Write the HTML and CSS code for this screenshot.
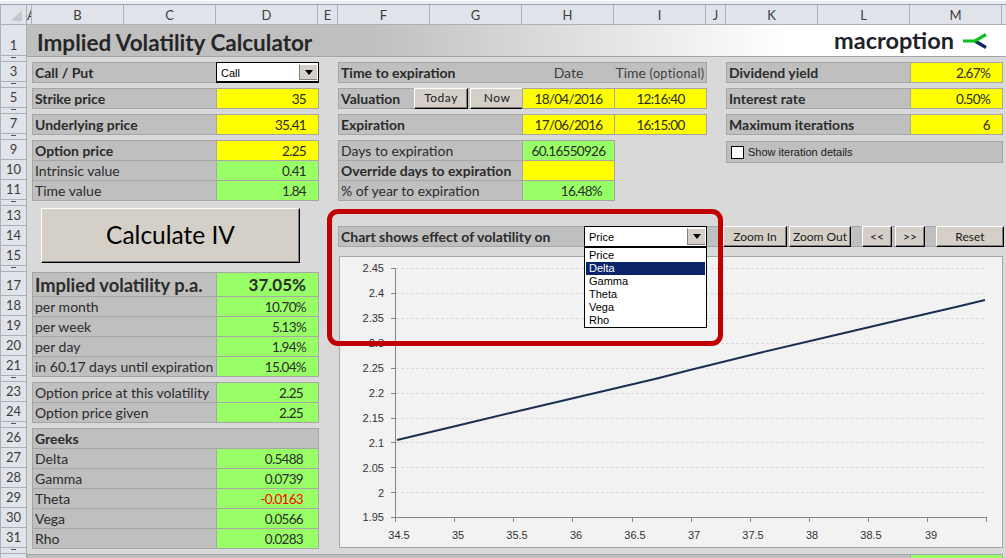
FILE: index.html

```html
<!DOCTYPE html>
<html lang="en">
<head>
    <meta charset="UTF-8">
    <meta name="viewport" content="width=device-width, initial-scale=1.0">
    <title>Implied Volatility Calculator</title>
    <link rel="stylesheet" href="styles.css">
</head>
<body>
    <div class="window-top"></div>

    <div class="sheet">
        <!-- Column headers -->
        <div class="corner"><span class="corner-mark"></span></div>
        <div class="col-head">A</div>
        <div class="col-head">B</div>
        <div class="col-head">C</div>
        <div class="col-head">D</div>
        <div class="col-head">E</div>
        <div class="col-head">F</div>
        <div class="col-head">G</div>
        <div class="col-head">H</div>
        <div class="col-head">I</div>
        <div class="col-head">J</div>
        <div class="col-head">K</div>
        <div class="col-head">L</div>
        <div class="col-head">M</div>
        <div class="col-head col-rest"></div>

        <!-- Row headers -->
        <div class="row-head r1">1</div>
        <div class="row-head gap r2"></div>
        <div class="row-head r3">3</div>
        <div class="row-head gap r4"></div>
        <div class="row-head r5">5</div>
        <div class="row-head gap r6"></div>
        <div class="row-head r7">7</div>
        <div class="row-head gap r8"></div>
        <div class="row-head r9">9</div>
        <div class="row-head r10">10</div>
        <div class="row-head r11">11</div>
        <div class="row-head gap r12"></div>
        <div class="row-head r13">13</div>
        <div class="row-head r14">14</div>
        <div class="row-head r15">15</div>
        <div class="row-head gap r16"></div>
        <div class="row-head r17">17</div>
        <div class="row-head r18">18</div>
        <div class="row-head r19">19</div>
        <div class="row-head r20">20</div>
        <div class="row-head r21">21</div>
        <div class="row-head gap r22"></div>
        <div class="row-head r23">23</div>
        <div class="row-head r24">24</div>
        <div class="row-head gap r25"></div>
        <div class="row-head r26">26</div>
        <div class="row-head r27">27</div>
        <div class="row-head r28">28</div>
        <div class="row-head r29">29</div>
        <div class="row-head r30">30</div>
        <div class="row-head r31">31</div>
        <div class="row-head gap r32"></div>
        <div class="row-head r33"></div>

        <!-- Title bar -->
        <div class="title-bar">
            <h1>Implied Volatility Calculator</h1>
            <div class="logo">
                <span class="logo-text">macroption</span>
                <svg class="logo-mark" width="26" height="16" viewBox="0 0 26 16">
                    <path d="M13 8 L24 14.500" stroke="#0f2a5c" stroke-width="3.200" fill="none"/>
                    <path d="M1 8 H13 L24 1.500" stroke="#0fc01f" stroke-width="3.200" fill="none"/>
                </svg>
            </div>
        </div>

        <!-- Left block -->
        <div class="cell label bold a-bc r3">Call / Put</div>
        <div class="combo combo-call a-d r3"><span class="combo-text">Call</span><span class="combo-btn"><i class="arrow"></i></span></div>

        <div class="cell label bold a-bc r5">Strike price</div>
        <div class="cell input num a-d r5">35</div>

        <div class="cell label bold a-bc r7">Underlying price</div>
        <div class="cell input num a-d r7">35.41</div>

        <div class="cell label bold a-bc r9">Option price</div>
        <div class="cell input num a-d r9">2.25</div>
        <div class="cell label a-bc r10">Intrinsic value</div>
        <div class="cell calc num a-d r10">0.41</div>
        <div class="cell label a-bc r11">Time value</div>
        <div class="cell calc num a-d r11">1.84</div>

        <button class="btn btn-calc">Calculate IV</button>

        <div class="cell label big bold a-bc r17">Implied volatility p.a.</div>
        <div class="cell calc num big bold a-d r17">37.05%</div>
        <div class="cell label a-bc r18">per month</div>
        <div class="cell calc num a-d r18">10.70%</div>
        <div class="cell label a-bc r19">per week</div>
        <div class="cell calc num a-d r19">5.13%</div>
        <div class="cell label a-bc r20">per day</div>
        <div class="cell calc num a-d r20">1.94%</div>
        <div class="cell label a-bc r21">in 60.17 days until expiration</div>
        <div class="cell calc num a-d r21">15.04%</div>

        <div class="cell label a-bc r23">Option price at this volatility</div>
        <div class="cell calc num wide a-d r23">2.25</div>
        <div class="cell label a-bc r24">Option price given</div>
        <div class="cell calc num wide a-d r24">2.25</div>

        <div class="cell label bold a-bcd r26">Greeks</div>
        <div class="cell label a-bc r27">Delta</div>
        <div class="cell calc num wide a-d r27">0.5488</div>
        <div class="cell label a-bc r28">Gamma</div>
        <div class="cell calc num wide a-d r28">0.0739</div>
        <div class="cell label a-bc r29">Theta</div>
        <div class="cell calc num wide neg a-d r29">-0.0163</div>
        <div class="cell label a-bc r30">Vega</div>
        <div class="cell calc num wide a-d r30">0.0566</div>
        <div class="cell label a-bc r31">Rho</div>
        <div class="cell calc num wide a-d r31">0.0283</div>

        <!-- Middle block -->
        <div class="cell label bold a-fg r3">Time to expiration</div>
        <div class="cell label no-side a-h r3">Date</div>
        <div class="cell label no-side a-i r3">Time <small>(optional)</small></div>

        <div class="cell label bold a-fg r5 valuation">
            <span class="valuation-name">Valuation</span>
            <button class="btn btn-small btn-today">Today</button>
            <button class="btn btn-small btn-now">Now</button>
        </div>
        <div class="cell input mid a-h r5">18/04/2016</div>
        <div class="cell input mid a-i r5">12:16:40</div>

        <div class="cell label bold a-fg r7">Expiration</div>
        <div class="cell input mid a-h r7">17/06/2016</div>
        <div class="cell input mid a-i r7">16:15:00</div>

        <div class="cell label a-fg r9">Days to expiration</div>
        <div class="cell calc mid a-h r9">60.16550926</div>
        <div class="cell label bold a-fg r10">Override days to expiration</div>
        <div class="cell input a-h r10"></div>
        <div class="cell label a-fg r11">% of year to expiration</div>
        <div class="cell calc num a-h r11">16.48%</div>

        <!-- Right block -->
        <div class="cell label bold a-kl r3">Dividend yield</div>
        <div class="cell input num a-m r3">2.67%</div>
        <div class="cell label bold a-kl r5">Interest rate</div>
        <div class="cell input num a-m r5">0.50%</div>
        <div class="cell label bold a-kl r7">Maximum iterations</div>
        <div class="cell input num a-m r7">6</div>
        <div class="cell label check-row">
            <span class="checkbox"></span>
            <span>Show iteration details</span>
        </div>

        <!-- Chart controls -->
        <div class="cell label bold chart-bar">
            <span class="chart-bar-name">Chart shows effect of volatility on</span>
            <div class="combo combo-chart"><span class="combo-text">Price</span><span class="combo-btn"><i class="arrow"></i></span></div>
            <button class="btn btn-tool btn-zoom-in">Zoom In</button>
            <button class="btn btn-tool btn-zoom-out">Zoom Out</button>
            <button class="btn btn-tool btn-prev">&lt;&lt;</button>
            <button class="btn btn-tool btn-next">&gt;&gt;</button>
            <button class="btn btn-tool btn-reset">Reset</button>
        </div>

        <!-- Chart -->
        <div class="chart-box">
            <svg class="chart" width="664" height="292" viewBox="339 256 664 292">
                <g class="grid-lines">
                    <path d="M396 268.500H986M396 293.500H986M396 318.500H986M396 343.500H986M396 368.500H986M396 393.500H986M396 418.500H986M396 442.500H986M396 467.500H986M396 492.500H986"/>
                </g>
                <g class="axis">
                    <path d="M395.500 268V517.500H986.500M391 268.500H395M391 293.500H395M391 318.500H395M391 343.500H395M391 368.500H395M391 393.500H395M391 418.500H395M391 442.500H395M391 467.500H395M391 492.500H395M391 517.500H395"/>
                    <path d="M395.500 517V522M454.500 517V522M513.500 517V522M572.500 517V522M632.500 517V522M691.500 517V522M750.500 517V522M809.500 517V522M868.500 517V522M927.500 517V522M986.500 517V522"/>
                </g>
                <polyline class="series" points="397,440 457,425.700 523,410 590,394.300 657,378.500 690,370 757,353.500 823,338 890,322.300 957,306.700 985,300"/>
                <g class="y-labels">
                    <text x="384" y="272">2.45</text>
                    <text x="384" y="297">2.4</text>
                    <text x="384" y="322">2.35</text>
                    <text x="384" y="347">2.3</text>
                    <text x="384" y="372">2.25</text>
                    <text x="384" y="397">2.2</text>
                    <text x="384" y="422">2.15</text>
                    <text x="384" y="447">2.1</text>
                    <text x="384" y="472">2.05</text>
                    <text x="384" y="497">2</text>
                    <text x="384" y="521">1.95</text>
                </g>
                <g class="x-labels">
                    <text x="399" y="539">34.5</text>
                    <text x="458" y="539">35</text>
                    <text x="517" y="539">35.5</text>
                    <text x="576" y="539">36</text>
                    <text x="635" y="539">36.5</text>
                    <text x="694" y="539">37</text>
                    <text x="753" y="539">37.5</text>
                    <text x="812" y="539">38</text>
                    <text x="871" y="539">38.5</text>
                    <text x="931" y="539">39</text>
                </g>
            </svg>
        </div>

        <!-- Row 33 -->
        <div class="cell label a-bl r33 rest"></div>
        <div class="cell calc a-m r33 rest"></div>

        <!-- Open dropdown list and the red highlight lie over the sheet -->
        <ul class="combo-list">
            <li>Price</li>
            <li class="selected">Delta</li>
            <li>Gamma</li>
            <li>Theta</li>
            <li>Vega</li>
            <li>Rho</li>
        </ul>
        <div class="highlight"></div>
    </div>
</body>
</html>
```

FILE: styles.css

```css
/* GLOBAL STYLES */
* {
    box-sizing: border-box;
}

html, body {
    margin: 0;
    height: 100%;
    overflow: hidden;
}

body {
    font-family: Lato, "Open Sans", sans-serif;
    font-size: 14px;
    color: #2b2b2b;
    background-color: #d9d9d9;
}

.window-top {
    height: 5px;
    background-color: #e9edf2;
    border-top: 1px solid #ffffff;
    border-bottom: 1px solid #9aa3ad;
}

/* SHEET GRID */
.sheet {
    position: relative;
    display: grid;
    grid-template-columns: 27px 5px 92px 92px 102px 20px 92px 92px 92px 92px 20px 92px 92px 92px 4px;
    grid-template-rows:
        20px 31px 6px 20px 6px 20px 6px 20px 6px 20px 20px 20px 6px
        20px 20px 20px 6px 24px 20px 20px 20px 20px 6px 20px 20px 6px
        20px 20px 20px 20px 20px 20px 6px 20px;
}

.corner {
    grid-column: 1;
    grid-row: 1;
    background-color: #e0e4ea;
    border-left: 1px solid #a9b0b8;
    border-right: 1px solid #a9b0b8;
    border-bottom: 1px solid #a9b0b8;
    position: relative;
}

.corner-mark {
    position: absolute;
    right: 4px;
    bottom: 3px;
    border-style: solid;
    border-width: 0 0 11px 11px;
    border-color: transparent transparent #c3c8ce transparent;
}

.col-head {
    grid-row: 1;
    background-color: #e0e4ea;
    border-right: 1px solid #a9b0b8;
    border-bottom: 1px solid #a9b0b8;
    text-align: center;
    line-height: 20px;
    font-size: 13px;
    color: #3c3c3c;
    overflow: hidden;
}

.col-rest {
    border-right: 0;
}

.row-head {
    grid-column: 1;
    background-color: #e0e4ea;
    border-left: 1px solid #a9b0b8;
    border-right: 1px solid #a9b0b8;
    border-bottom: 1px solid #a9b0b8;
    display: flex;
    align-items: flex-end;
    justify-content: center;
    line-height: 19px;
    font-size: 13px;
    color: #3c3c3c;
    overflow: hidden;
}

/* the thin spacer rows only show a sliver of their number */
.gap {
    align-items: flex-start;
}

.gap::before {
    content: "";
    width: 5px;
    height: 1px;
    margin-top: 1px;
    background-color: #555555;
}

/* ROWS */
.r1 { grid-row: 2; }
.r2 { grid-row: 3; }
.r3 { grid-row: 4; }
.r4 { grid-row: 5; }
.r5 { grid-row: 6; }
.r6 { grid-row: 7; }
.r7 { grid-row: 8; }
.r8 { grid-row: 9; }
.r9 { grid-row: 10; }
.r10 { grid-row: 11; }
.r11 { grid-row: 12; }
.r12 { grid-row: 13; }
.r13 { grid-row: 14; }
.r14 { grid-row: 15; }
.r15 { grid-row: 16; }
.r16 { grid-row: 17; }
.r17 { grid-row: 18; }
.r18 { grid-row: 19; }
.r19 { grid-row: 20; }
.r20 { grid-row: 21; }
.r21 { grid-row: 22; }
.r22 { grid-row: 23; }
.r23 { grid-row: 24; }
.r24 { grid-row: 25; }
.r25 { grid-row: 26; }
.r26 { grid-row: 27; }
.r27 { grid-row: 28; }
.r28 { grid-row: 29; }
.r29 { grid-row: 30; }
.r30 { grid-row: 31; }
.r31 { grid-row: 32; }
.r32 { grid-row: 33; }
.r33 { grid-row: 34; }

/* COLUMN SPANS */
.a-bc { grid-column: 3 / 5; }
.a-bcd { grid-column: 3 / 6; }
.a-d { grid-column: 5; }
.a-fg { grid-column: 7 / 9; }
.a-h { grid-column: 9; }
.a-i { grid-column: 10; }
.a-kl { grid-column: 12 / 14; }
.a-m { grid-column: 14; }
.a-bl { grid-column: 2 / 14; }

/* TITLE */
.title-bar {
    grid-column: 2 / 16;
    grid-row: 2;
    display: flex;
    align-items: center;
    justify-content: space-between;
    padding: 0 18px 0 10px;
    margin-bottom: -1px;
    border-bottom: 1px solid #a6a6a6;
    background: linear-gradient(to right, #bfbfbf 0, #bfbfbf 340px, #ffffff 760px);
}

h1 {
    margin: 0;
    font-size: 22.5px;
    font-weight: bold;
    color: #262626;
    padding-top: 3px;
}

.logo {
    display: flex;
    align-items: center;
    gap: 8px;
}

.logo-text {
    font-size: 23.500px;
    font-weight: bold;
    color: #1f2328;
    margin-top: -2px;
}

.logo-mark {
    margin-top: 1px;
}

/* CELLS */
.cell {
    border: 1px solid #a6a6a6;
    margin: 0 -1px -1px 0;
    line-height: 20px;
    white-space: nowrap;
    overflow: hidden;
}

.label {
    background-color: #bfbfbf;
    padding-left: 2px;
}

.bold {
    font-weight: bold;
}

.input {
    background-color: #ffff00;
}

.calc {
    background-color: #99ff66;
}

.num {
    text-align: right;
    padding-right: 12px;
    font-size: 13.5px;
    letter-spacing: -0.7px;
}

.wide {
    padding-right: 15px;
}

.mid {
    text-align: center;
    font-size: 13.5px;
    letter-spacing: -0.7px;
}

.big {
    font-size: 17px;
    line-height: 24px;
    letter-spacing: 0;
}

.label.big {
    font-size: 18.3px;
}

.neg {
    color: #ff0000;
}

.no-side {
    border-left: 0;
    border-right: 0;
    text-align: center;
    padding-left: 0;
    color: #404040;
}

.no-side + .no-side {
    border-right: 1px solid #a6a6a6;
}

small {
    font-size: 12.5px;
    letter-spacing: 0.4px;
}

.rest {
    margin-bottom: 0;
}

/* COMBOS */
.combo {
    display: flex;
    border: 1px solid #000000;
    background-color: #ffffff;
    font-family: "Liberation Sans", sans-serif;
    font-size: 11px;
    font-weight: normal;
    color: #000000;
}

.combo-call {
    margin: 0 -1px -1px 0;
    border-width: 1px 1px 2px 1px;
}

.combo-text {
    flex: 1;
    padding-left: 4px;
    line-height: 20px;
}

.combo-btn {
    width: 18px;
    margin: 1px 1px 1px 0;
    display: flex;
    align-items: center;
    justify-content: center;
    background-color: #d4d0c8;
    border-left: 1px solid #808080;
    border-top: 1px solid #ffffff;
    border-bottom: 1px solid #808080;
}

.arrow {
    border-style: solid;
    border-width: 5px 4.500px 0 4.500px;
    border-color: #000000 transparent transparent transparent;
}

.combo-list {
    position: absolute;
    left: 584px;
    top: 242px;
    width: 123px;
    margin: 0;
    padding: 1px 1px 0;
    list-style: none;
    background-color: #ffffff;
    border: 1px solid #000000;
    font-family: "Liberation Sans", sans-serif;
    font-size: 11px;
    color: #000000;
}

.combo-list li {
    height: 13px;
    line-height: 13px;
    padding-left: 3px;
}

.combo-list .selected {
    background-color: #0a246a;
    color: #ffffff;
}

/* BUTTONS */
.btn {
    display: block;
    flex: none;
    padding: 0;
    font-family: inherit;
    color: #1a1a1a;
    background-color: #d4d0c8;
    border-style: solid;
    border-width: 1px;
    border-color: #ffffff #000000 #000000 #ffffff;
    box-shadow: inset -1px -1px 0 #808080;
}

.btn-calc {
    grid-column: 3 / 5;
    grid-row: 14 / 17;
    margin: 2px 19px 0 9px;
    width: 259px;
    height: 55px;
    font-size: 24.500px;
    color: #000000;
    padding-bottom: 2px;
}

.btn-small {
    width: 54px;
    height: 21px;
    margin-top: -1px;
    padding-bottom: 3px;
    font-size: 12px;
    font-weight: normal;
    letter-spacing: 0.5px;
}

.valuation {
    display: flex;
    align-items: flex-start;
    overflow: visible;
}

.valuation-name {
    width: 73px;
    flex: none;
}

.btn-today {
    margin-right: 2px;
}

/* CHECK ROW */
.check-row {
    grid-column: 12 / 15;
    grid-row: 10;
    height: 22px;
    margin: 1px -1px 0 0;
    display: flex;
    align-items: center;
    gap: 4px;
    padding-left: 4px;
    font-family: "Liberation Sans", sans-serif;
    font-size: 11px;
    color: #1a1a1a;
}

.checkbox {
    width: 13px;
    height: 13px;
    background-color: #ffffff;
    border: 1px solid #000000;
}

/* CHART BAR */
.chart-bar {
    grid-column: 7 / 15;
    grid-row: 15;
    display: flex;
    align-items: flex-start;
    overflow: visible;
}

.chart-bar-name {
    flex: none;
    width: 243px;
    height: 18px;
}

.combo-chart {
    flex: none;
    width: 123px;
    height: 21px;
    margin-top: -1px;
    border-width: 1px;
}

.btn-tool {
    height: 21px;
    margin-top: -1px;
    font-size: 12px;
    font-weight: normal;
}

.btn-zoom-in {
    width: 64px;
    margin-left: 16px;
}

.btn-zoom-out {
    width: 62px;
    margin-left: 2px;
}

.btn-prev {
    width: 30px;
    margin-left: 11px;
}

.btn-next {
    width: 30px;
    margin-left: 3px;
}

.btn-reset {
    width: 68px;
    margin-left: 11px;
}

/* CHART */
.chart-box {
    grid-column: 7 / 15;
    grid-row: 16 / 34;
    height: 292px;
    align-self: start;
    margin: 10px -1px 0 1px;
    border: 1px solid #a6a6a6;
    background-color: #f2f2f2;
    overflow: hidden;
}

.chart {
    display: block;
    margin: -1px;
}

.chart text {
    font-family: "Liberation Sans", sans-serif;
    font-size: 11px;
    fill: #333333;
}

.y-labels text {
    text-anchor: end;
}

.x-labels text {
    text-anchor: middle;
}

.grid-lines path {
    stroke: #d9d9d9;
    stroke-width: 1;
    stroke-dasharray: 3 2;
    fill: none;
}

.axis path {
    stroke: #868686;
    stroke-width: 1;
    fill: none;
}

.series {
    stroke: #1b2f52;
    stroke-width: 2;
    fill: none;
}

/* RED HIGHLIGHT */
.highlight {
    position: absolute;
    left: 327px;
    top: 204px;
    width: 396px;
    height: 137px;
    border: 5px solid #c00000;
    border-radius: 11px;
}
```
